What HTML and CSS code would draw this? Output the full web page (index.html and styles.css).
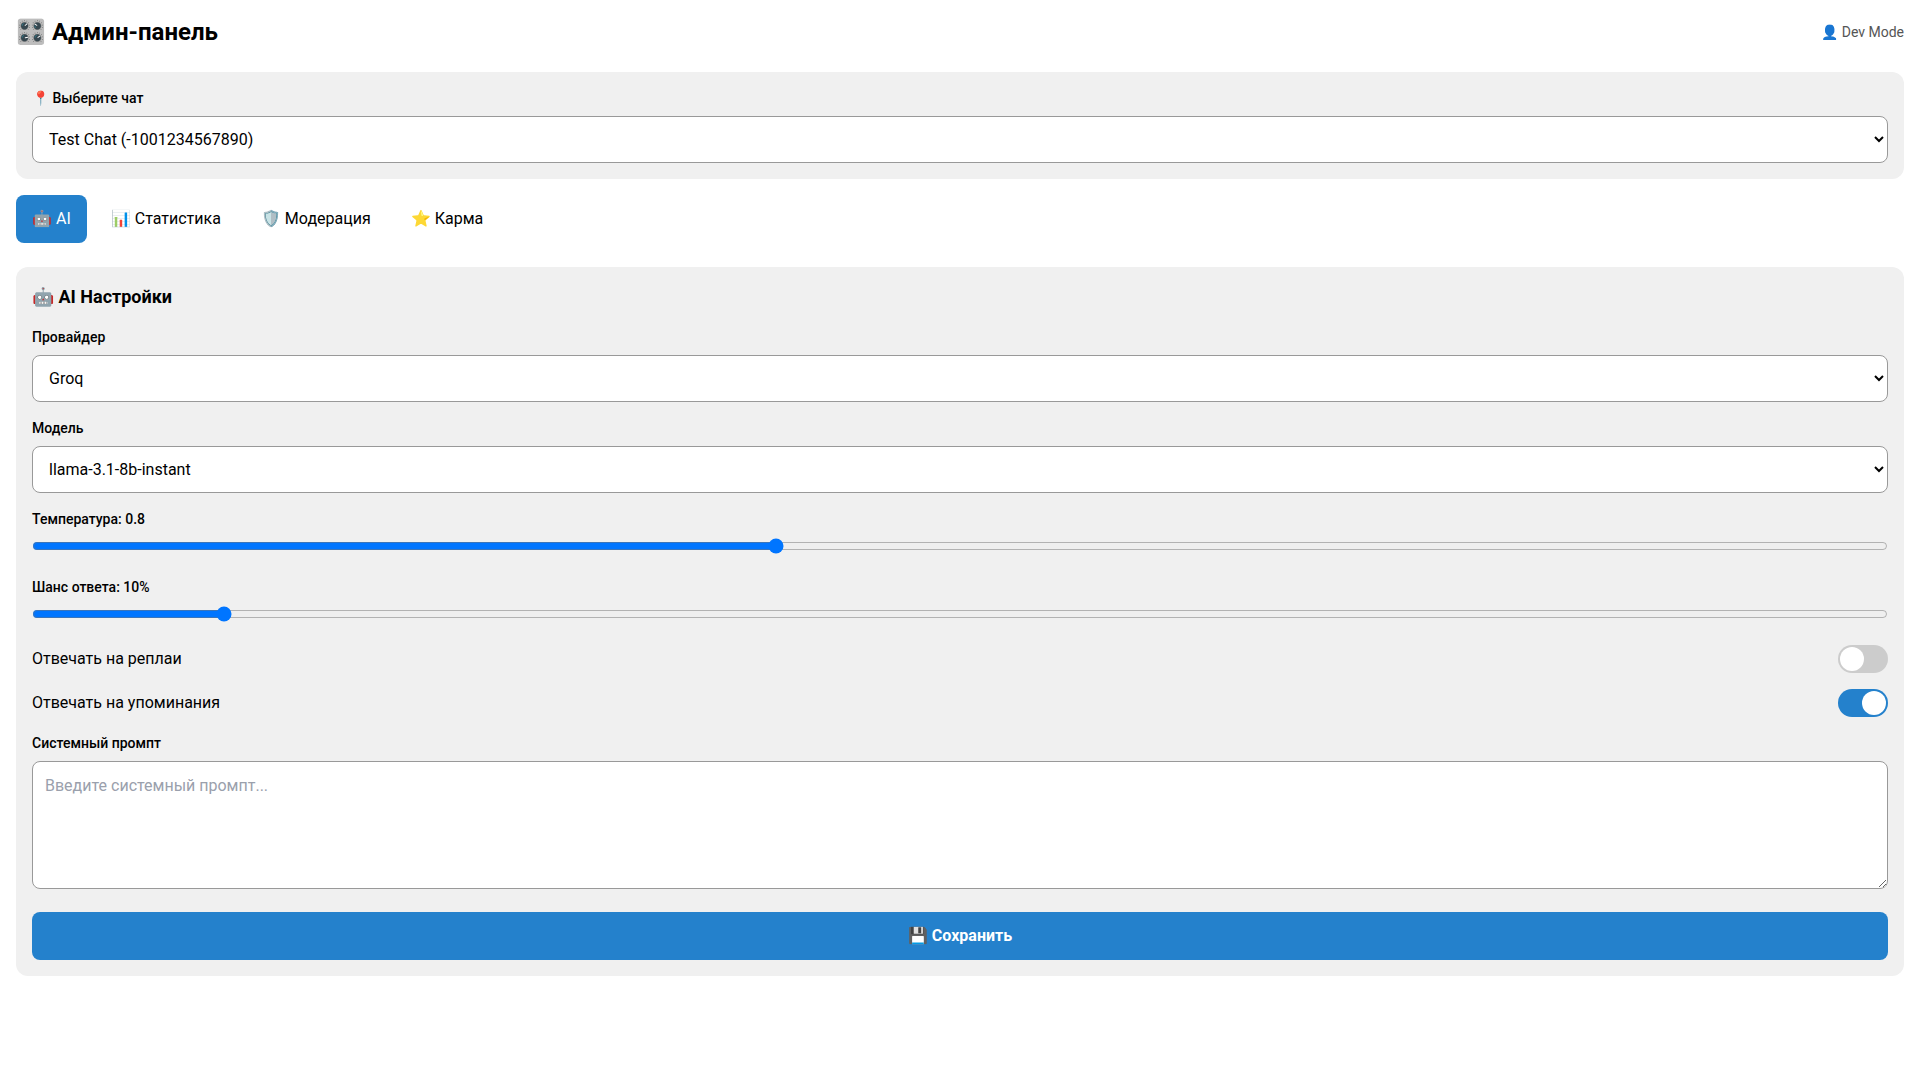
FILE: index.html
```html
<!DOCTYPE html>
<html lang="ru">
<head>
<meta charset="utf-8">
<title>Админ-панель</title>
<link rel="stylesheet" href="styles.css">
</head>
<body>
<header class="header">
  <h1 class="title">🎛️ Админ-панель</h1>
  <span class="user">👤 Dev Mode</span>
</header>
<section class="card chat-card">
  <label class="label">📍 Выберите чат</label>
  <select class="input"><option>Test Chat (-1001234567890)</option></select>
</section>
<nav class="tabs">
  <button class="tab active">🤖 AI</button>
  <button class="tab">📊 Статистика</button>
  <button class="tab">🛡️ Модерация</button>
  <button class="tab">⭐ Карма</button>
</nav>
<section class="card">
  <h2 class="card-title">🤖 AI Настройки</h2>
  <div class="field">
    <label class="label">Провайдер</label>
    <select class="input"><option>Groq</option></select>
  </div>
  <div class="field">
    <label class="label">Модель</label>
    <select class="input"><option>llama-3.1-8b-instant</option></select>
  </div>
  <div class="field field-range">
    <label class="label">Температура: 0.8</label>
    <input class="range" type="range" min="0" max="2" step="0.1" value="0.8">
  </div>
  <div class="field field-range">
    <label class="label">Шанс ответа: 10%</label>
    <input class="range" type="range" min="0" max="100" value="10">
  </div>
  <div class="toggle-row">
    <span class="toggle-text">Отвечать на реплаи</span>
    <span class="toggle"><span class="knob"></span></span>
  </div>
  <div class="toggle-row">
    <span class="toggle-text">Отвечать на упоминания</span>
    <span class="toggle on"><span class="knob"></span></span>
  </div>
  <div class="field">
    <label class="label">Системный промпт</label>
    <textarea class="textarea" placeholder="Введите системный промпт..."></textarea>
  </div>
  <button class="save">💾 Сохранить</button>
</section>
</body>
</html>
```
FILE: styles.css
```css
* { box-sizing: border-box; }
html, body { margin: 0; }
body {
  padding: 16px;
  background: #fff;
  color: #000;
  font-family: Roboto, "Noto Sans", sans-serif;
  font-size: 16px;
}
.header {
  display: flex;
  justify-content: space-between;
  align-items: center;
  height: 32px;
  margin-bottom: 24px;
}
.title { margin: 0; font-size: 24px; font-weight: 700; line-height: 32px; }
.user { font-size: 14px; color: #555; }
.card {
  background: #f0f0f0;
  border-radius: 12px;
  padding: 16px;
}
.label {
  display: block;
  font-size: 14px;
  font-weight: 500;
  line-height: 19px;
  padding-top: 1px;
  margin-bottom: 8px;
}
.input {
  display: block;
  width: 100%;
  height: 47px;
  padding: 12px;
  font: 16px Roboto, sans-serif;
  color: #000;
  background: #fff;
  border: 1px solid #999;
  border-radius: 8px;
}
.tabs { display: flex; gap: 8px; margin: 16px 0 24px; }
.tab {
  height: 48px;
  padding: 0 16px 2px;
  border: 0;
  border-radius: 8px;
  background: transparent;
  color: #000;
  font: 16px Roboto, sans-serif;
}
.tab.active { background: #2481cc; color: #fff; }
.card-title {
  margin: 0 0 16px;
  font-size: 18px;
  font-weight: 700;
  line-height: 28px;
}
.field { margin-bottom: 16px; }
.field-range { margin-bottom: 22px; }
.range { display: block; width: 100%; margin: 0; height: 18px; }
.toggle-row {
  display: flex;
  justify-content: space-between;
  align-items: center;
  height: 28px;
  margin-bottom: 16px;
  font-size: 16px;
}
.toggle-text { padding-bottom: 2px; }
.toggle {
  display: block;
  width: 50px;
  height: 28px;
  padding: 2px;
  border-radius: 14px;
  background: #ccc;
}
.toggle.on { background: #2481cc; }
.knob {
  display: block;
  width: 24px;
  height: 24px;
  border-radius: 50%;
  background: #fff;
}
.toggle.on .knob { margin-left: 22px; }
.textarea {
  display: block;
  width: 100%;
  height: 128px;
  padding: 12px;
  font: 16px/24px Roboto, sans-serif;
  background: #fff;
  border: 1px solid #999;
  border-radius: 8px;
  resize: vertical;
}
.textarea::placeholder { color: #9aa0ac; }
.save {
  display: block;
  width: 100%;
  height: 48px;
  margin-top: 23px;
  padding-bottom: 2px;
  border: 0;
  border-radius: 8px;
  background: #2481cc;
  color: #fff;
  font: 700 16px Roboto, sans-serif;
}
```
